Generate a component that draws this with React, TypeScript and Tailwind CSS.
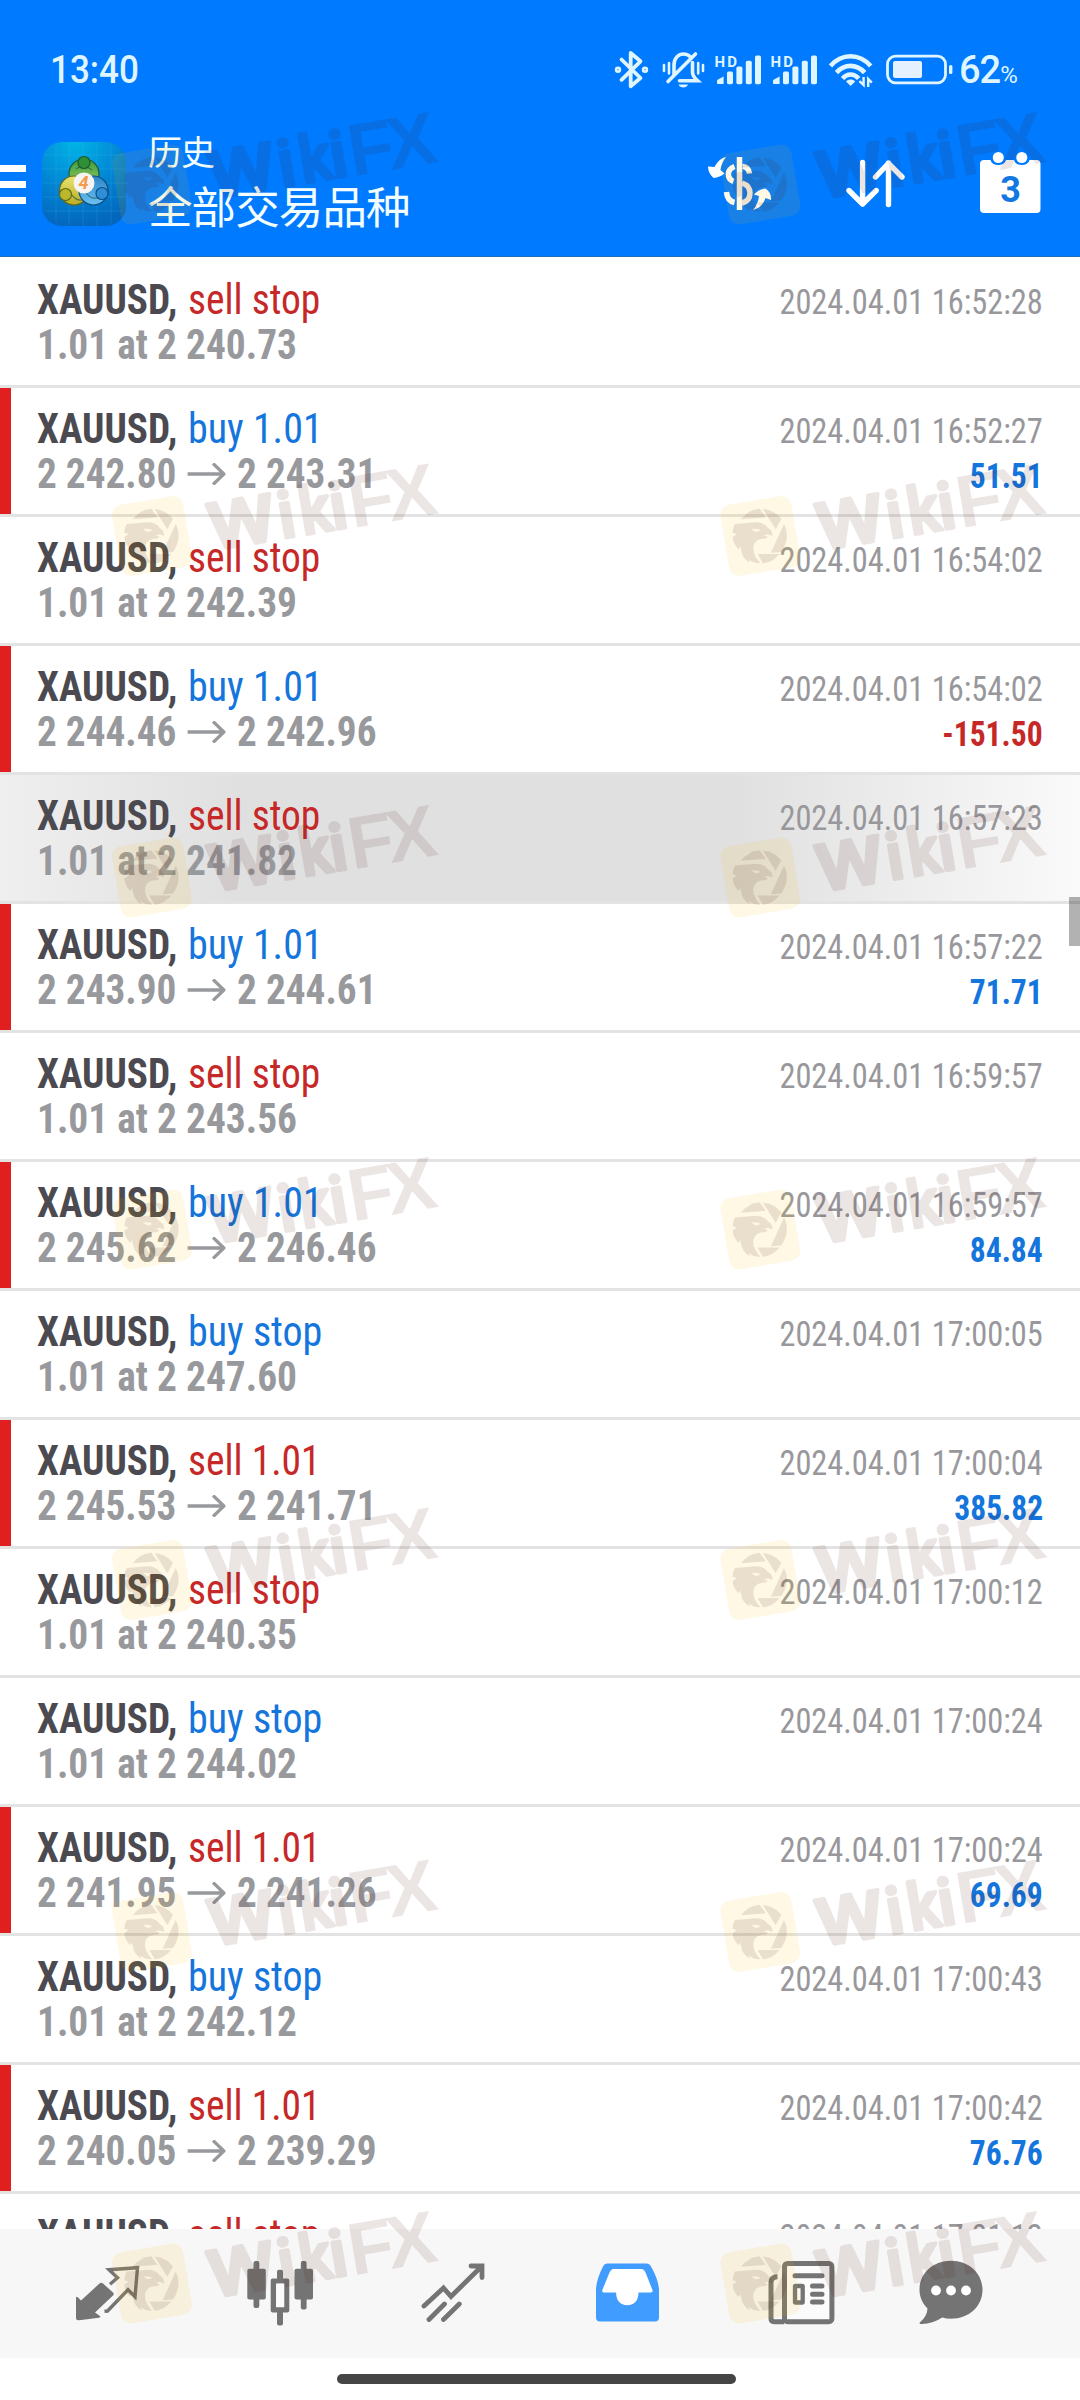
type Deal = {
  side: "buy" | "sell"
  label: string
  time: string
  price?: string
  from?: string
  to?: string
  profit?: string
  pressed?: boolean
}

const deals: Deal[] = [
  { side: "sell", label: "sell stop", price: "2 240.73", time: "2024.04.01 16:52:28" },
  { side: "buy", label: "buy 1.01", from: "2 242.80", to: "2 243.31", time: "2024.04.01 16:52:27", profit: "51.51" },
  { side: "sell", label: "sell stop", price: "2 242.39", time: "2024.04.01 16:54:02" },
  { side: "buy", label: "buy 1.01", from: "2 244.46", to: "2 242.96", time: "2024.04.01 16:54:02", profit: "-151.50" },
  { side: "sell", label: "sell stop", price: "2 241.82", time: "2024.04.01 16:57:23", pressed: true },
  { side: "buy", label: "buy 1.01", from: "2 243.90", to: "2 244.61", time: "2024.04.01 16:57:22", profit: "71.71" },
  { side: "sell", label: "sell stop", price: "2 243.56", time: "2024.04.01 16:59:57" },
  { side: "buy", label: "buy 1.01", from: "2 245.62", to: "2 246.46", time: "2024.04.01 16:59:57", profit: "84.84" },
  { side: "buy", label: "buy stop", price: "2 247.60", time: "2024.04.01 17:00:05" },
  { side: "sell", label: "sell 1.01", from: "2 245.53", to: "2 241.71", time: "2024.04.01 17:00:04", profit: "385.82" },
  { side: "sell", label: "sell stop", price: "2 240.35", time: "2024.04.01 17:00:12" },
  { side: "buy", label: "buy stop", price: "2 244.02", time: "2024.04.01 17:00:24" },
  { side: "sell", label: "sell 1.01", from: "2 241.95", to: "2 241.26", time: "2024.04.01 17:00:24", profit: "69.69" },
  { side: "buy", label: "buy stop", price: "2 242.12", time: "2024.04.01 17:00:43" },
  { side: "sell", label: "sell 1.01", from: "2 240.05", to: "2 239.29", time: "2024.04.01 17:00:42", profit: "76.76" },
  { side: "sell", label: "sell stop", price: "2 239.88", time: "2024.04.01 17:01:12" },
]

const Signal = ({ className }: { className?: string }) => (
  <svg className={className} width="48" height="44" viewBox="714 48 48 44" fill="currentColor">
    <text x="714.4" y="67.4" className="font-bold [font-family:Roboto]" fontSize="15" textLength="22.5">
      HD
    </text>
    <path d="M717 81.5a2 2 0 0 1 1-2l5.6-3V84H718a1 1 0 0 1-1-1z" />
    <rect x="727" y="71.6" width="6" height="12.6" rx="1.6" />
    <rect x="736.4" y="66.6" width="6" height="17.6" rx="1.6" />
    <rect x="745.8" y="60.8" width="6" height="23.4" rx="1.6" />
    <rect x="755" y="55.6" width="6" height="28.6" rx="1.6" />
  </svg>
)

const StatusBar = () => (
  <div className="flex h-[140px] items-center pr-[59px] pl-[50px] text-[#dff5ff]">
    <span className="inline-block origin-left scale-x-[0.91] text-[38.5px] leading-none font-medium">13:40</span>
    <div className="ml-auto flex items-center">
      <svg width="37" height="44" viewBox="613 48 37 44" fill="none" stroke="currentColor" strokeWidth="3.8" strokeLinejoin="round" strokeLinecap="round">
        <path d="M621.5 59.5l19 18.5-9.8 8.3V53l9.8 8.3-19 18.5" />
        <circle cx="618" cy="69.7" r="1.3" />
        <circle cx="645" cy="69.7" r="1.3" />
      </svg>
      <svg className="ml-[11px]" width="45" height="44" viewBox="661 48 45 44" fill="none" stroke="currentColor" strokeWidth="3.6" strokeLinecap="round">
        <path d="M674 74.5V65c0-7 4.5-11 9.500-11 3 0 5 1 6.500 2.500M692.500 62.500v9.500c0 4 2 6 5 8.700h-18M695.500 54L668 81.500" />
        <path d="M678.500 84.500h9.500c-1 2.200-2.500 3-4.700 3s-3.800-.8-4.800-3z" fill="currentColor" stroke="none" />
        <path d="M664 65v6M669 63v10.500M698.200 63v10.500M703 65v6" strokeWidth="2.600" />
      </svg>
      <Signal className="ml-[8px]" />
      <Signal className="ml-[8px]" />
      <svg className="ml-[10px]" width="46" height="44" viewBox="828 48 46 44" fill="none" stroke="currentColor" strokeWidth="4.600">
        <path d="M830.500 66c11-13 29-13 40.200 0M836.500 72.600c8-9 20-9 28.200 0M842.500 78.500c4.800-5.400 11.400-5.400 16.200 0" />
        <path d="M850.600 86l-4.600-4.500c2.600-2.600 6.600-2.600 9.200 0z" fill="currentColor" stroke="none" />
        <path d="M863.600 77v8l-4.200-3.800M868.200 87v-8l3.600 3.600" strokeWidth="2.400" />
      </svg>
      <svg className="ml-[11px]" width="68" height="44" viewBox="885 48 68 44">
        <rect x="887.500" y="56.200" width="58" height="26.600" rx="8" fill="none" stroke="currentColor" strokeWidth="2.800" />
        <rect x="893" y="61" width="29" height="17" rx="2" fill="#e6f1ff" />
        <rect x="949" y="65" width="3.400" height="9" rx="1.500" fill="currentColor" />
      </svg>
      <div className="ml-[6px] flex w-[62px] items-baseline leading-none">
        <span className="text-[38px] font-medium tracking-[-1px]">62</span>
        <span className="text-[24px] font-normal">%</span>
      </div>
    </div>
  </div>
)

const AppIcon = () => (
  <svg className="ml-[16px]" width="84" height="84" viewBox="0 0 84 84">
    <defs>
      <radialGradient id="iconBg" cx=".4" cy="0" r="1">
        <stop offset="0" stopColor="#00b4e6" />
        <stop offset=".55" stopColor="#0286d4" />
        <stop offset="1" stopColor="#0367bd" />
      </radialGradient>
      <linearGradient id="iconGreen" x2="0" y2="1">
        <stop offset="0" stopColor="#3c9a3c" />
        <stop offset="1" stopColor="#9fd06a" />
      </linearGradient>
      <linearGradient id="iconYellow" x2="0" y2="1">
        <stop offset="0" stopColor="#e9e372" />
        <stop offset="1" stopColor="#b9ae22" />
      </linearGradient>
      <linearGradient id="iconBlue" x2="0" y2="1">
        <stop offset="0" stopColor="#2c86c8" />
        <stop offset="1" stopColor="#6cc2f2" />
      </linearGradient>
    </defs>
    <rect width="84" height="84" rx="20" fill="url(#iconBg)" />
    <path d="M14 4v76M27 1v82M41 0v84M55 0v84M69 3v78M2 13h80M0 27h84M0 41h84M0 55h84M2 69h80" stroke="#5cc8f5" strokeOpacity=".16" />
    <g strokeWidth="1.200">
      <circle cx="42" cy="32" r="15" fill="url(#iconGreen)" stroke="#1c5a2e" />
      <circle cx="32" cy="48.500" r="14.500" fill="url(#iconYellow)" stroke="#5f6a1c" />
      <circle cx="51.500" cy="48.500" r="14.500" fill="url(#iconBlue)" stroke="#0d4f86" />
      <path d="M28 50c3 6 8 9 12 8M44 50c2 4 6 7 12 6M34 27c3-3 12-3 16 1" fill="none" stroke="#1b4d54" strokeOpacity=".6" />
      <circle cx="42" cy="20.500" r="6" fill="#2f8f35" stroke="#1c5a2e" />
      <circle cx="23.500" cy="52.500" r="6" fill="#bdb72a" stroke="#5f6a1c" />
      <circle cx="60" cy="51.500" r="6" fill="#2f8fd6" stroke="#0d4f86" />
    </g>
    <circle cx="42" cy="41" r="10.500" fill="#f6f4f2" />
    <text x="41.500" y="47.300" textAnchor="middle" fontSize="18" fill="#f29a4e" className="font-bold italic [font-family:Roboto]">
      4
    </text>
  </svg>
)

const Toolbar = () => (
  <div className="flex h-[88px] items-center pr-[38px]">
    <div className="flex flex-col gap-[9px]">
      <span className="h-[7px] w-[26px] bg-white" />
      <span className="h-[7px] w-[26px] bg-white" />
      <span className="h-[7px] w-[26px] bg-white" />
    </div>
    <AppIcon />
    <div className="mb-[12px] ml-[22px] flex flex-col leading-[54px] text-[#f2feff] [font-family:'Noto_Sans_CJK_SC',sans-serif]">
      <span className="text-[34px] tracking-[-1px]">历史</span>
      <span className="text-[44.500px] tracking-[-0.900px]">全部交易品种</span>
    </div>
    <div className="ml-auto flex items-center gap-[70px] text-white">
      <svg width="68" height="68" viewBox="706 150 68 68" fill="none" stroke="currentColor" strokeWidth="5.500">
        <path d="M739.500 157v53" />
        <path d="M749.500 173.500c-.5-4-3-7-7-7M734.500 166.500c-8 3-8 12-1 15M742 183c6 2 8 5 8 10 0 6-4 9-8 10M726.500 192c.5 6 3.500 9.500 8 10.500" />
        <path d="M726 157c-5 1-9 5-11.500 10l-6.500-.5c0 4.500 2 8.500 5.500 11.500 4.500-.5 8-2 11-4.500l-4-3.500c.5-5 2.500-9 5.500-13zM753 210c4-5 5.500-9 6-14l-5-1.500c3-3.500 7-5.500 11.500-6 4 2.500 6 6.500 5.500 11.500l-5.500-2c-2 6-6 10.500-12.500 12z" fill="currentColor" stroke="none" />
      </svg>
      <svg width="64" height="68" viewBox="844 150 64 68" fill="none" stroke="currentColor" strokeWidth="5.400" strokeLinecap="round" strokeLinejoin="round">
        <path d="M862.600 162.500v41.500M849 190.500l13.600 13.700 13.600-13.700M888.500 204.500V163M875.500 177l13-13.700L902 177" />
      </svg>
      <svg width="64" height="68" viewBox="978 150 64 68">
        <path
          d="M984 160h6.500c1 3.500 3.500 5 7.700 5s6.800-1.500 7.800-5h8c1 3.500 3.500 5 7.700 5s6.800-1.500 7.800-5h7a4 4 0 0 1 4 4v45a4 4 0 0 1-4 4h-52.500a4 4 0 0 1-4-4v-45a4 4 0 0 1 4-4z"
          fill="white"
        />
        <circle cx="998.300" cy="157.500" r="5.500" fill="white" />
        <circle cx="1021.800" cy="157.500" r="5.500" fill="white" />
        <text x="1010.500" y="201.500" textAnchor="middle" fontSize="36" fill="#1277e0" className="font-bold [font-family:Roboto]">
          3
        </text>
      </svg>
    </div>
  </div>
)

const DealRow = ({ deal }: { deal: Deal }) => (
  <div
    className={
      deal.pressed
        ? "flex h-[129px] shrink-0 border-b-3 border-[#e3e3e3] bg-[linear-gradient(90deg,#efefef_0%,#e0e0e0_22%,#e0e0e0_68%,#fafafa_100%)]"
        : "flex h-[129px] shrink-0 border-b-3 border-[#e3e3e3]"
    }
  >
    <div className={deal.profit ? "w-[11px] bg-[#e01f1f]" : "w-[11px]"} />
    <div className="flex-1 pt-[18px] pr-[37px] pl-[26px] whitespace-nowrap">
      <div className="flex h-[45px] items-baseline justify-between leading-[45px]">
        <span className="flex items-baseline text-[42px]">
          <span className="w-[151px] origin-left scale-x-[0.934] font-bold text-[#4b4a50]">XAUUSD,</span>
          <span
            className={
              deal.side === "buy"
                ? "origin-left scale-x-[0.952] text-[#1475dc]"
                : "origin-left scale-x-[0.94] text-[#c62828]"
            }
          >
            {deal.label}
          </span>
        </span>
        <span className="origin-right scale-x-[0.938] text-[34.500px] text-[#98989c]">{deal.time}</span>
      </div>
      <div className="flex h-[45px] items-baseline justify-between leading-[45px] font-bold">
        {deal.price ? (
          <span className="origin-left scale-x-[0.938] text-[42px] text-[#98999d]">1.01 at {deal.price}</span>
        ) : (
          <span className="flex origin-left scale-x-[0.934] items-baseline text-[42px] text-[#98999d]">
            {deal.from}
            <svg className="mx-[12px] w-[41px] self-center" height="22" viewBox="0 0 41 22" fill="none" stroke="currentColor" strokeWidth="3.400">
              <path d="M0 11h38M27.500 .5L39 11 27.500 21.500" />
            </svg>
            {deal.to}
          </span>
        )}
        {deal.profit && (
          <span
            className={
              deal.profit.startsWith("-")
                ? "origin-right scale-x-[0.915] text-[34.500px] text-[#c62828]"
                : "origin-right scale-x-[0.915] text-[34.500px] text-[#1475dc]"
            }
          >
            {deal.profit}
          </span>
        )}
      </div>
    </div>
  </div>
)

const BottomNav = () => (
  <nav className="flex h-[129px] items-center gap-[101px] bg-[#f7f7f7] pl-[72px] text-[#747474]">
    <svg width="72" height="70" viewBox="72 2258.500 72 70">
      <path
        d="M76 2297.500q0-2 1.500-1l3.500 3.500 18.500-17q2-1.500 3.500 0l10 9q1.500 1.500 0 3l-18 17 5 3.500q1 1-1 1.700l-20 2.500q-3 .3-3-2z"
        fill="currentColor"
      />
      <path d="M110 2283.700l7.500-6.500-8.500-8 28.500-2-2.500 29-7-7-20.500 21.300-3 .3" fill="none" stroke="currentColor" strokeWidth="3.400" />
    </svg>
    <svg width="72" height="70" viewBox="245 2258.500 72 70" fill="currentColor">
      <rect x="247.300" y="2268.300" width="18.500" height="30.700" rx="2" />
      <rect x="253.500" y="2260.500" width="5.800" height="47" rx="2" />
      <path d="M272.700 2278h14.600a2 2 0 0 1 2 2v30a2 2 0 0 1-2 2h-14.600a2 2 0 0 1-2-2v-30a2 2 0 0 1 2-2zm3.300 5v23.700h8.300V2283z" fillRule="evenodd" />
      <rect x="276.500" y="2283.300" width="7.300" height="23" rx="1" fill="#fbfbfb" />
      <rect x="277" y="2269.300" width="6" height="11" rx="2" />
      <rect x="277" y="2310" width="6" height="15" rx="2" />
      <rect x="294.500" y="2268.300" width="18.500" height="30.700" rx="2" />
      <rect x="300.800" y="2260.500" width="5.800" height="48.500" rx="2" />
    </svg>
    <svg width="72" height="70" viewBox="418 2258.500 72 70" fill="none" stroke="currentColor" strokeWidth="4.800" strokeLinecap="round">
      <path d="M424 2305.500l19.500-18 7.500 8.500 31-30.500M471 2265.500h11v11.500M429 2319l15.500-15.500M443.500 2319l15.800-15.500" />
    </svg>
    <svg width="72" height="70" viewBox="591 2258.500 72 70">
      <path
        d="M607 2263h39.500q3 0 4.500 3c5 9 8 17 8 24v27a4 4 0 0 1-4 4h-55a4 4 0 0 1-4-4v-27c0-7 2.500-15 7-24q1.500-3 4-3z"
        fill="#409cff"
      />
      <path
        d="M613.500 2268.500h28q2.500 0 4 3.500l7 17.500q.7 2.500-1.500 2.500h-12.500c0 8-4 12.700-11.200 12.700s-11.200-4.700-11.200-12.700H604q-2.500 0-1.500-3l7-17q1.500-3.500 4-3.500z"
        fill="#fff"
      />
    </svg>
    <svg width="72" height="70" viewBox="764 2258.500 72 70" fill="none" stroke="currentColor" strokeWidth="5">
      <path d="M777.500 2276.300c-4 0-6.500 2-6.500 6V2318q0 3.200 3.200 3.200h10" />
      <rect x="784.500" y="2262.900" width="47.400" height="58.300" rx="3" fill="#fbfbfb" />
      <path d="M795 2275.300h27M812.500 2285.600h9.500M812.500 2293.700h9.500M812.500 2301.500h9.500" strokeLinecap="round" />
      <rect x="795" y="2285.500" width="7.700" height="16.500" rx=".5" strokeWidth="4.300" />
    </svg>
    <svg className="-ml-[22px]" width="72" height="70" viewBox="915 2258.500 72 70" fill="currentColor">
      <path d="M951 2260.300c18 0 31.500 12.500 31.500 29s-13.500 29-31.500 29c-3 0-6-.4-8.700-1.200-7 4.500-14 6.700-22 6.400-1 0-1-1.300 0-2 4.500-4 7-8.500 7.200-13.500-5-5-8-11.500-8-18.700 0-16.500 13.500-29 31.500-29z" />
      <circle cx="936" cy="2290" r="4.900" fill="#fff" />
      <circle cx="951" cy="2290" r="4.900" fill="#fff" />
      <circle cx="966" cy="2290" r="4.900" fill="#fff" />
    </svg>
  </nav>
)

const markRows = [184.500, 536, 877.500, 1229.500, 1580, 1932, 2283.500]
const markCols = [152, 760.300]

const Watermark = () => (
  <svg className="pointer-events-none absolute inset-0" width="1080" height="2400" viewBox="0 0 1080 2400">
    <defs>
      <g id="mark">
        <rect x="-36" y="-36" width="72" height="72" rx="10" transform="rotate(-9.600)" fill="#f5b800" opacity=".1" />
        <g opacity=".106" fill="#4b140f" stroke="#4b140f">
          <g transform="scale(.3333) translate(-180 -858)" stroke="none">
            <path d="M122 808A78 78 0 0 1 178 776L196 802z" />
            <path d="M188 777A82 82 0 0 1 243 806L226 838z" />
            <path d="M251 822Q272 862 243 906L212 908z" />
            <path d="M172 912L238 912Q215 938 188 940z" />
            <path
              d="M104 822L150 818Q190 812 203 834Q218 842 216 858Q206 850 190 856L202 860Q200 866 186 866Q166 868 160 886Q154 912 180 940Q156 940 146 928L148 938Q126 924 124 906L120 890L114 898Q98 880 97 862L110 852L97 848Q98 832 104 822ZM152 836L166 846L180 842L176 838Z"
              fillRule="evenodd"
            />
          </g>
          <g transform="rotate(-9.600)" className="[font-family:'Liberation_Sans',sans-serif]" fontSize="74">
            <g className="font-medium [font-family:Roboto]" fontSize="65" strokeWidth="3.600" strokeLinejoin="round" strokeLinecap="round">
              <text x="57" y="24" textLength="67" lengthAdjust="spacingAndGlyphs">W</text>
              <text x="127.500" y="24">i</text>
              <text x="149.500" y="24" textLength="31" lengthAdjust="spacingAndGlyphs">k</text>
              <text x="180" y="24">i</text>
            </g>
            <text x="199" y="25.500" className="font-bold" stroke="none">F</text>
            <text x="238" y="25.500" className="font-bold" stroke="none">X</text>
          </g>
        </g>
      </g>
    </defs>
    {markRows.map((y) => markCols.map((x) => <use key={`${x}-${y}`} href="#mark" x={x} y={y} />))}
  </svg>
)

const App = () => {
  return (
    <div className="relative flex h-[2400px] w-[1080px] flex-col overflow-hidden bg-white [font-family:Roboto,sans-serif]">
      <header className="h-[257px] shrink-0 border-b border-[#1f6fb8] bg-[#007aff]">
        <StatusBar />
        <Toolbar />
      </header>
      <main className="flex h-[1972px] shrink-0 flex-col overflow-hidden pt-[2px] [font-family:'Roboto_Condensed',Roboto,sans-serif]">
        {deals.map((deal, i) => (
          <DealRow key={i} deal={deal} />
        ))}
      </main>
      <div className="absolute top-[897px] right-0 h-[49px] w-[11px] bg-black/30" />
      <BottomNav />
      <div className="flex flex-1 justify-center pt-[16px] pr-[7px]">
        <div className="h-[10px] w-[399px] rounded-full bg-[#454545]" />
      </div>
      <Watermark />
    </div>
  )
}

export default App
